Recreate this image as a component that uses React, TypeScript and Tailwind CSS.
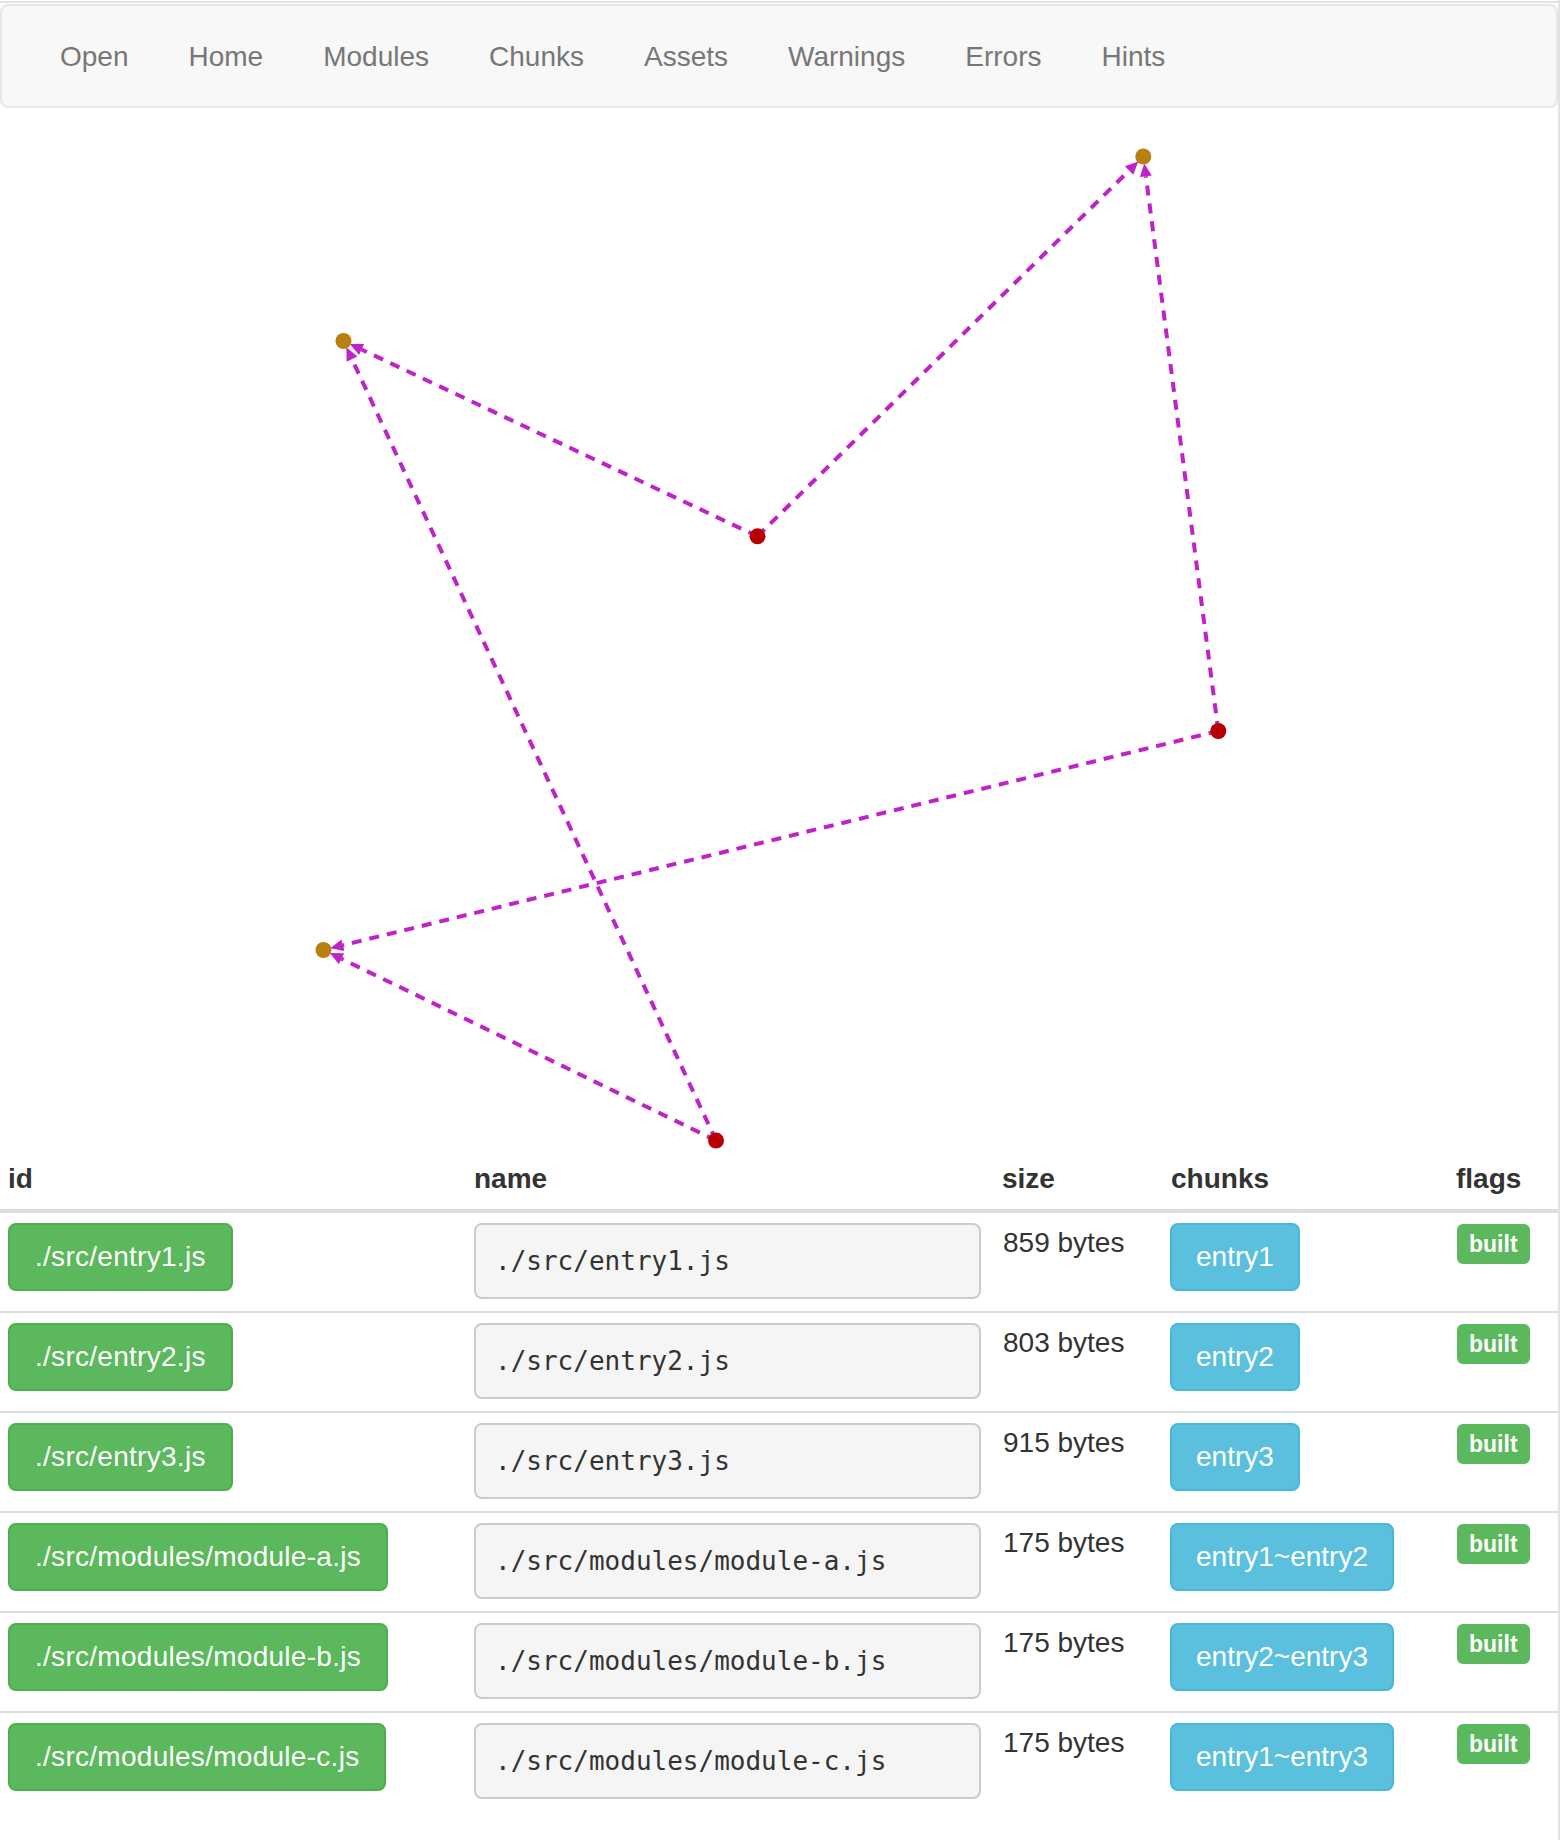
import React from 'react';

type Pt = { x: number; y: number };

// node positions inside the graph svg (full px)
const nodes: Record<string, Pt & { kind: 'chunk' | 'module' }> = {
  o1: { x: 343.5, y: 233, kind: 'chunk' },
  o2: { x: 1143.3, y: 48.5, kind: 'chunk' },
  o3: { x: 323.5, y: 842, kind: 'chunk' },
  r1: { x: 757.5, y: 428.3, kind: 'module' },
  r2: { x: 1218.3, y: 623, kind: 'module' },
  r3: { x: 716, y: 1032.5, kind: 'module' },
};

const edges: [string, string][] = [
  ['r1', 'o1'],
  ['r1', 'o2'],
  ['r2', 'o2'],
  ['r2', 'o3'],
  ['r3', 'o3'],
  ['r3', 'o1'],
];

const EDGE = '#c021c8';

function Edge({ from, to }: { from: Pt; to: Pt }) {
  const dx = to.x - from.x;
  const dy = to.y - from.y;
  const len = Math.hypot(dx, dy);
  const ux = dx / len;
  const uy = dy / len;
  const tip = { x: to.x - ux * 7, y: to.y - uy * 7 };
  const base = { x: tip.x - ux * 13, y: tip.y - uy * 13 };
  const px = -uy * 6;
  const py = ux * 6;
  return (
    <g>
      <line
        x1={from.x}
        y1={from.y}
        x2={base.x}
        y2={base.y}
        stroke={EDGE}
        strokeWidth={4}
        strokeDasharray="10 8"
      />
      <polygon
        points={`${tip.x},${tip.y} ${base.x + px},${base.y + py} ${base.x - px},${base.y - py}`}
        fill={EDGE}
      />
    </g>
  );
}

function Graph() {
  return (
    <svg width={1558} height={1041} className="block">
      {edges.map(([a, b]) => (
        <Edge key={a + b} from={nodes[a]} to={nodes[b]} />
      ))}
      {Object.entries(nodes).map(([k, n]) => (
        <circle key={k} cx={n.x} cy={n.y} r={8} fill={n.kind === 'chunk' ? '#b8800f' : '#b80000'} />
      ))}
    </svg>
  );
}

const navItems = ['Open', 'Home', 'Modules', 'Chunks', 'Assets', 'Warnings', 'Errors', 'Hints'];

const rows = [
  { id: './src/entry1.js', size: '859 bytes', chunks: 'entry1' },
  { id: './src/entry2.js', size: '803 bytes', chunks: 'entry2' },
  { id: './src/entry3.js', size: '915 bytes', chunks: 'entry3' },
  { id: './src/modules/module-a.js', size: '175 bytes', chunks: 'entry1~entry2' },
  { id: './src/modules/module-b.js', size: '175 bytes', chunks: 'entry2~entry3' },
  { id: './src/modules/module-c.js', size: '175 bytes', chunks: 'entry1~entry3' },
];

export default function App() {
  return (
    <div
      className="w-[1560px] min-h-[1840px] border-r-2 border-[#e3e3e3] bg-white text-[#333]"
      style={{ fontFamily: '"Liberation Sans", Arial, sans-serif' }}
    >
      <div className="h-[1px]" />
      <div className="h-[2px] bg-[#e3e3e3]" />
      <div className="h-[1px]" />
      {/* navbar */}
      <nav className="w-[1558px] border-2 border-[#e7e7e7] bg-[#f8f8f8] rounded-[8px] pl-[28px]">
        <ul className="flex">
          {navItems.map((n) => (
            <li key={n}>
              <a className="block px-[30px] pt-[31px] pb-[29px] text-[28px] leading-[40px] text-[#777]">{n}</a>
            </li>
          ))}
        </ul>
      </nav>

      <Graph />

      <table className="w-[1558px] text-[28px] leading-[40px]">
        <thead>
          <tr className="border-b-4 border-[#ddd] text-left">
            <th className="w-[466px] pl-[8px] py-[10px] font-bold">id</th>
            <th className="w-[528px] pl-[8px] py-[10px] font-bold">name</th>
            <th className="w-[169px] pl-[8px] py-[10px] font-bold">size</th>
            <th className="w-[285px] pl-[8px] py-[10px] font-bold">chunks</th>
            <th className="pl-[8px] py-[10px] font-bold">flags</th>
          </tr>
        </thead>
        <tbody>
          {rows.map((r, i) => (
            <tr key={r.id} className={i > 0 ? 'border-t-2 border-[#ddd]' : ''}>
              <td className="align-top pl-[8px] pt-[10px] pb-[10px]">
                <span className="inline-block px-[25px] py-[12px] border-2 border-[#4cae4c] bg-[#5cb85c] text-white rounded-[8px] whitespace-nowrap tracking-[0.28px]">
                  {r.id}
                </span>
              </td>
              <td className="align-top pl-[8px] pt-[10px] pb-[10px]">
                <pre
                  className="w-[507px] h-[76px] mb-[2px] flex items-center px-[19px] border-2 border-[#ccc] bg-[#f5f5f5] rounded-[8px] text-[26px] text-[#333]"
                  style={{ fontFamily: '"DejaVu Sans Mono", "Liberation Mono", monospace' }}
                >
                  {r.id}
                </pre>
              </td>
              <td className="align-top pl-[9px] pt-[10px] pb-[10px] whitespace-nowrap">{r.size}</td>
              <td className="align-top pl-[7px] pt-[10px] pb-[10px]">
                <span className="inline-block px-[24px] py-[12px] border-2 border-[#46b8da] bg-[#5bc0de] text-white rounded-[8px] whitespace-nowrap">
                  {r.chunks}
                </span>
              </td>
              <td className="align-top pl-[9px] pt-[10px] pb-[10px]">
                <span className="inline-flex items-center justify-center h-[40px] px-[12px] bg-[#5cb85c] text-white text-[23px] font-bold rounded-[6px]">
                  built
                </span>
              </td>
            </tr>
          ))}
        </tbody>
      </table>
    </div>
  );
}
